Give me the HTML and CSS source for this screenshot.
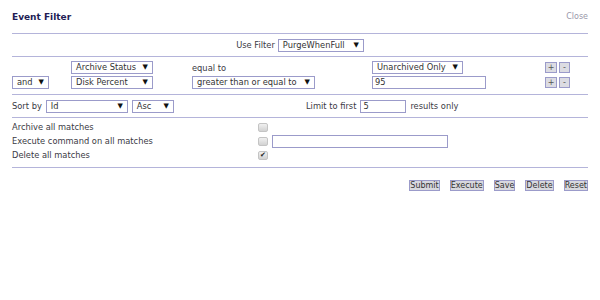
FILE: index.html
```html
<!DOCTYPE html>
<html>
<head>
  <title>Event Filter</title>
  <link rel="stylesheet" href="styles.css">
</head>
<body>
  <div class="panel">
    <div class="head">
      <span class="title">Event Filter</span>
      <a class="close" href="#">Close</a>
    </div>

    <div class="use-row">
      <span>Use Filter</span>
      <span class="sel w-filter"><span>PurgeWhenFull</span><span class="arr">&#9660;</span></span>
    </div>

    <div class="terms">
      <span></span>
      <span class="sel w-attr"><span>Archive Status</span><span class="arr">&#9660;</span></span>
      <span class="txt">equal to</span>
      <span class="sel w-unarch"><span>Unarchived Only</span><span class="arr">&#9660;</span></span>
      <span class="pm"><span class="mini">+</span><span class="mini">-</span></span>

      <span class="sel w-and"><span>and</span><span class="arr">&#9660;</span></span>
      <span class="sel w-attr"><span>Disk Percent</span><span class="arr">&#9660;</span></span>
      <span class="sel w-op"><span>greater than or equal to</span><span class="arr">&#9660;</span></span>
      <span class="inp w-val">95</span>
      <span class="pm"><span class="mini">+</span><span class="mini">-</span></span>
    </div>

    <div class="sort-row">
      <div class="sort-left">
        <span>Sort by</span>
        <span class="sel w-sort"><span>Id</span><span class="arr">&#9660;</span></span>
        <span class="sel w-dir"><span>Asc</span><span class="arr">&#9660;</span></span>
      </div>
      <div class="limit">
        <span>Limit to first</span>
        <span class="inp w-limit">5</span>
        <span>results only</span>
      </div>
    </div>

    <div class="actions">
      <span>Archive all matches</span>
      <span class="cell"><span class="chk"></span></span>
      <span>Execute command on all matches</span>
      <span class="cell"><span class="chk"></span><span class="inp w-cmd"></span></span>
      <span>Delete all matches</span>
      <span class="cell"><span class="chk on">&#10004;</span></span>
    </div>

    <div class="buttons">
      <span class="btn">Submit</span>
      <span class="btn">Execute</span>
      <span class="btn">Save</span>
      <span class="btn">Delete</span>
      <span class="btn">Reset</span>
    </div>
  </div>
</body>
</html>
```

FILE: styles.css
```css
body {
  margin: 0;
  background: #fff;
  font-family: "DejaVu Sans", Verdana, sans-serif;
  font-size: 8.3px;
  color: #3a3a44;
}
.panel {
  width: 576px;
  padding: 0 12px;
}
.head {
  height: 33px;
  display: flex;
  align-items: center;
  justify-content: space-between;
  border-bottom: 1px solid #b4b4da;
}
.title {
  font-weight: bold;
  font-size: 9px;
  color: #231d55;
}
.close {
  color: #9a98aa;
  font-size: 8px;
  text-decoration: none;
}

.use-row {
  height: 22px;
  display: flex;
  align-items: center;
  justify-content: center;
  gap: 3px;
  border-bottom: 1px solid #b4b4da;
}

/* fake selects and inputs */
.sel, .inp {
  box-sizing: border-box;
  flex-shrink: 0;
  height: 13px;
  border: 1px solid #9b9bca;
  background: #fff;
  display: inline-flex;
  align-items: center;
  padding: 0 4px;
  color: #333;
  line-height: 1;
}
.sel {
  justify-content: space-between;
}
.inp {
  padding: 0 2px;
}
.arr {
  font-size: 7px;
  color: #111;
}
.w-filter { width: 86px; }
.w-attr { width: 82px; }
.w-and { width: 37px; }
.w-op { width: 123px; }
.w-unarch { width: 91px; }
.w-val { width: 114px; }
.w-sort { width: 82px; }
.w-dir { width: 42px; }
.w-limit { width: 46px; }
.w-cmd { width: 176px; height: 13px; margin-left: 4px; }

.terms {
  display: grid;
  grid-template-columns: 59px 121px 180px 173px auto;
  grid-auto-rows: 13px;
  row-gap: 2px;
  align-items: center;
  padding: 4px 0 5px;
  border-bottom: 1px solid #b4b4da;
}
.pm {
  display: flex;
  gap: 2px;
}
.mini {
  box-sizing: border-box;
  width: 12px;
  height: 11px;
  border: 1px solid #9b9bca;
  background: #dcdce2;
  display: flex;
  align-items: center;
  justify-content: center;
  font-size: 8px;
  color: #555;
}
.mini + .mini {
  width: 11px;
}

.sort-row {
  height: 22px;
  display: flex;
  align-items: center;
  border-bottom: 1px solid #b4b4da;
}
.sort-left {
  display: flex;
  align-items: center;
  gap: 4px;
  width: 294px;
}
.limit {
  display: flex;
  align-items: center;
  gap: 4px;
}

.actions {
  display: grid;
  grid-template-columns: 246px auto;
  grid-auto-rows: 14px;
  align-items: center;
  padding: 2px 0 5px;
  border-bottom: 1px solid #b4b4da;
}
.cell {
  display: flex;
  align-items: center;
}
.chk {
  box-sizing: border-box;
  width: 10px;
  height: 9px;
  border: 1px solid #c4c4c4;
  border-radius: 2px;
  background: linear-gradient(#f0f0f0, #d2d2d2);
  display: flex;
  align-items: center;
  justify-content: center;
  font-size: 7px;
  color: #222;
}

.buttons {
  display: flex;
  justify-content: flex-end;
  gap: 10px;
  margin-top: 12px;
}
.btn {
  box-sizing: border-box;
  height: 11px;
  padding: 0;
  border: 1px solid #9b9bca;
  background: #d8d8de;
  display: flex;
  align-items: center;
  font-size: 8px;
  color: #333;
}
```
